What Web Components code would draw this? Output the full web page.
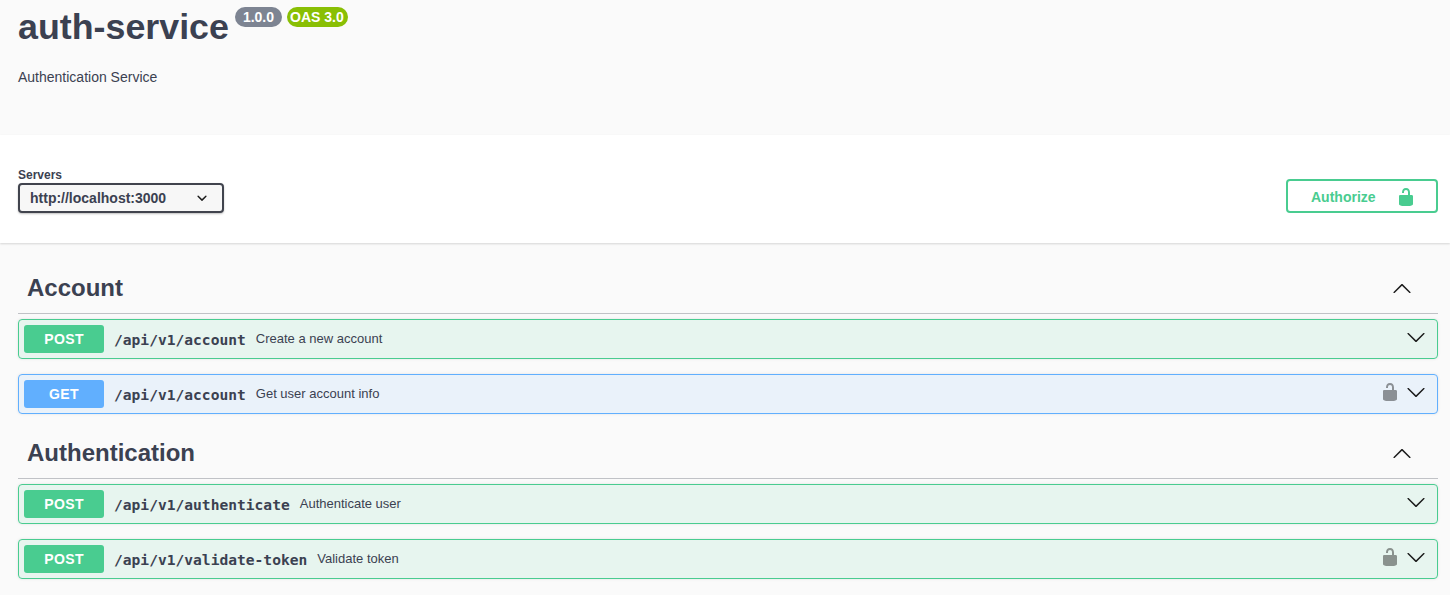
<!DOCTYPE html>
<html>
<head>
<meta charset="utf-8">
<title>auth-service</title>
<style>
  html, body { margin: 0; padding: 0; }
  body {
    background: #fafafa;
    color: #3b4151;
    font-family: "Liberation Sans", Arial, sans-serif;
  }
</style>
</head>
<body>
<api-info name="auth-service" version="1.0.0" oas="OAS 3.0">Authentication Service</api-info>
<scheme-bar server="http://localhost:3000"></scheme-bar>
<main-list>
  <op-tag name="Account">
    <op-block method="post" path="/api/v1/account">Create a new account</op-block>
    <op-block method="get" path="/api/v1/account" locked>Get user account info</op-block>
  </op-tag>
  <op-tag name="Authentication">
    <op-block method="post" path="/api/v1/authenticate">Authenticate user</op-block>
    <op-block method="post" path="/api/v1/validate-token" locked>Validate token</op-block>
  </op-tag>
</main-list>

<script>
const ARROW_DOWN = "M17.418 6.109c.272-.268.709-.268.979 0s.271.701 0 .969l-7.908 7.83c-.27.268-.707.268-.979 0l-7.908-7.83c-.27-.268-.27-.701 0-.969.271-.268.709-.268.979 0L10 13.25l7.418-7.141z";
const ARROW_UP = "M17.418 14.891c.272.268.709.268.979 0s.271-.701 0-.969l-7.908-7.83c-.27-.268-.707-.268-.979 0l-7.908 7.83c-.27.268-.27.701 0 .969.271.268.709.268.979 0L10 7.75l7.418 7.141z";
const SELECT_ARROW = "M13.418 7.859a.695.695 0 01.978 0 .68.68 0 010 .969l-3.908 3.83a.697.697 0 01-.979 0l-3.908-3.83a.68.68 0 010-.969.695.695 0 01.978 0L10 11l3.418-3.141z";
const UNLOCKED = "M15.8 8H14V5.6C14 2.703 12.665 1 10 1 7.334 1 6 2.703 6 5.6V6h2v-.801C8 3.754 8.797 3 10 3c1.203 0 2 .754 2 2.199V8H4c-.553 0-1 .646-1 1.199V17c0 .549.428 1.139.951 1.307l1.197.387C5.672 18.861 6.55 19 7.1 19h5.8c.549 0 1.428-.139 1.951-.307l1.196-.387c.524-.167.953-.757.953-1.306V9.199C17 8.646 16.352 8 15.8 8z";

function icon(d, size, fill) {
  return `<svg width="${size}" height="${size}" viewBox="0 0 20 20" fill="${fill}"><path d="${d}"/></svg>`;
}

class ApiInfo extends HTMLElement {
  constructor() {
    super();
    this.root = this.attachShadow({mode: 'open'});
    this.root.innerHTML = `
      <style>
        :host {
          display: block;
          box-sizing: border-box;
          height: 135px;
          padding: 7px 18px 0;
        }
        .title {
          display: flex;
          align-items: flex-start;
          gap: 5px;
        }
        h1 {
          margin: -1px 1px 1px 0;
          font-size: 35.8px;
          line-height: 43px;
          font-weight: bold;
          color: #3b4151;
        }
        .badge {
          height: 20px;
          line-height: 20px;
          border-radius: 57px;
          font-size: 14px;
          font-weight: bold;
          color: #fff;
          box-sizing: border-box;
        }
        .version { background: #7d8492; padding: 0 8px; }
        .oas { background: #89bf04; padding: 0 4px 0 3px; }
        p {
          margin: 19px 0 0;
          font-size: 14px;
          line-height: 16px;
          color: #3b4151;
        }
      </style>
      <div class="title">
        <h1>${this.getAttribute('name')}</h1>
        <span class="badge version">${this.getAttribute('version')}</span>
        <span class="badge oas">${this.getAttribute('oas')}</span>
      </div>
      <p><slot></slot></p>`;
  }
}

class SchemeBar extends HTMLElement {
  constructor() {
    super();
    this.root = this.attachShadow({mode: 'open'});
    this.root.innerHTML = `
      <style>
        :host {
          display: flex;
          justify-content: space-between;
          align-items: flex-start;
          box-sizing: border-box;
          height: 108px;
          padding: 33px 12px 0 18px;
          background: #fff;
          box-shadow: 0 1px 2px 0 rgba(0,0,0,.15);
          position: relative;
        }
        label {
          display: block;
          font-size: 12px;
          line-height: 14px;
          font-weight: bold;
          color: #3b4151;
        }
        .select {
          display: flex;
          align-items: center;
          justify-content: space-between;
          box-sizing: border-box;
          width: 206px;
          height: 30px;
          margin-top: 1px;
          padding: 0 10px 0 10px;
          background: #f7f7f7;
          border: 2px solid #41444e;
          border-radius: 4px;
          box-shadow: 0 1px 2px 0 rgba(0,0,0,.25);
          font-size: 14px;
          font-weight: bold;
          color: #3b4151;
        }
        .select svg { display: block; }
        .authorize {
          display: flex;
          align-items: center;
          box-sizing: border-box;
          width: 152px;
          height: 34px;
          margin-top: 11px;
          padding: 2px 20px 0 23px;
          border: 2px solid #49cc90;
          border-radius: 4px;
          background: transparent;
          font-size: 14px;
          font-weight: bold;
          color: #49cc90;
          justify-content: space-between;
        }
        .authorize svg { display: block; }
      </style>
      <div>
        <label>Servers</label>
        <div class="select">
          <span>${this.getAttribute('server')}</span>
          ${icon(SELECT_ARROW, 20, '#1b1b1b')}
        </div>
      </div>
      <div class="authorize">
        <span>Authorize</span>
        ${icon(UNLOCKED, 20, '#49cc90')}
      </div>`;
  }
}

class MainList extends HTMLElement {
  constructor() {
    super();
    this.root = this.attachShadow({mode: 'open'});
    this.root.innerHTML = `
      <style>
        :host {
          display: block;
          padding: 21px 12px 0 18px;
        }
      </style>
      <slot></slot>`;
  }
}

class OpTag extends HTMLElement {
  constructor() {
    super();
    this.root = this.attachShadow({mode: 'open'});
    this.root.innerHTML = `
      <style>
        :host { display: block; }
        .head {
          display: flex;
          align-items: center;
          justify-content: space-between;
          box-sizing: border-box;
          height: 50px;
          padding: 9px 26px 10px 9px;
          margin-bottom: 5px;
          border-bottom: 1px solid rgba(59,65,81,.3);
        }
        h3 {
          margin: 0;
          font-size: 24px;
          line-height: 30px;
          font-weight: bold;
          color: #3b4151;
        }
        .head svg { display: block; }
      </style>
      <div class="head">
        <h3>${this.getAttribute('name')}</h3>
        ${icon(ARROW_UP, 20, '#1b1b1b')}
      </div>
      <slot></slot>`;
  }
}

class OpBlock extends HTMLElement {
  constructor() {
    super();
    this.root = this.attachShadow({mode: 'open'});
    let method = this.getAttribute('method');
    let colors = method == 'get'
      ? {main: '#61affe', bg: 'rgba(97,175,254,.1)'}
      : {main: '#49cc90', bg: 'rgba(73,204,144,.1)'};
    let lock = this.hasAttribute('locked') ? icon(UNLOCKED, 20, '#000') : '';
    this.root.innerHTML = `
      <style>
        :host {
          display: block;
          margin-bottom: 15px;
        }
        .block {
          display: flex;
          align-items: center;
          box-sizing: border-box;
          height: 40px;
          padding: 0 5px;
          background: ${colors.bg};
          border: 1px solid ${colors.main};
          border-radius: 4px;
          box-shadow: 0 0 3px rgba(0,0,0,.1);
        }
        .method {
          flex: none;
          box-sizing: border-box;
          width: 80px;
          height: 28px;
          line-height: 28px;
          text-align: center;
          border-radius: 3px;
          background: ${colors.main};
          color: #fff;
          font-size: 14px;
          letter-spacing: .4px;
          font-weight: bold;
        }
        .path {
          flex: none;
          padding: 1px 0 0 10px;
          font-family: "DejaVu Sans Mono", monospace;
          font-size: 14.6px;
          font-weight: bold;
          color: #3b4151;
        }
        .desc {
          flex: 1;
          padding: 0 0 2px 10px;
          font-size: 13px;
          color: #3b4151;
        }
        .icons {
          display: flex;
          align-items: center;
          gap: 6px;
          margin-right: 6px;
          margin-top: -5px;
        }
        .lock { opacity: .4; display: block; }
        svg { display: block; }
      </style>
      <div class="block">
        <span class="method">${method.toUpperCase()}</span>
        <span class="path">${this.getAttribute('path')}</span>
        <span class="desc"><slot></slot></span>
        <span class="icons">
          ${lock ? `<span class="lock">${lock}</span>` : ''}
          ${icon(ARROW_DOWN, 20, '#1b1b1b')}
        </span>
      </div>`;
  }
}

customElements.define('api-info', ApiInfo);
customElements.define('scheme-bar', SchemeBar);
customElements.define('main-list', MainList);
customElements.define('op-tag', OpTag);
customElements.define('op-block', OpBlock);
</script>
</body>
</html>
